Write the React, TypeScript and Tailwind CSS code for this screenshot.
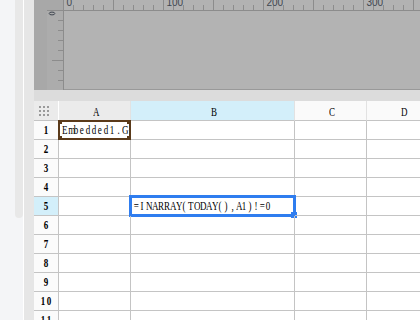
import React from "react";

const SERIF = { fontFamily: '"Liberation Serif", "DejaVu Serif", serif' };

const COLUMNS = [
  { key: "A", w: "w-[72px]", head: "bg-[#ebebeb]" },
  { key: "B", w: "w-[164px]", head: "bg-[#d3effa]" },
  { key: "C", w: "w-[72px]", head: "bg-[#fafafa]" },
  { key: "D", w: "w-[72px]", head: "bg-[#fafafa]" },
];

const ROWS = Array.from({ length: 11 }, (_, i) => i + 1);

// SimSun-like half-width text: every glyph sits in a 6px box
function Mono({ text }: { text: string }) {
  return (
    <span className="inline-flex">
      {text.split("").map((ch, i) => (
        <span key={i} className="inline-block w-[6px] text-center">
          <span className="inline-block scale-x-[0.75]">{ch}</span>
        </span>
      ))}
    </span>
  );
}

function HRuler() {
  const ticks = Array.from({ length: 36 }, (_, k) => k);
  return (
    <svg width="356" height="10" className="block">
      {ticks.map((k) =>
        k === 0 ? null : (
          <line
            key={k}
            x1={10 * k - 0.5}
            x2={10 * k - 0.5}
            y1={k % 5 === 0 ? 0 : 5}
            y2={10}
            stroke="#8c8c8c"
            strokeWidth="1"
          />
        )
      )}
      {[0, 100, 200, 300].map((n) => (
        <text
          key={n}
          x={n + 2.5}
          y={6}
          fontSize="10"
          fill="#3f4650"
          fontFamily="Liberation Sans, Arial, sans-serif"
        >
          {n}
        </text>
      ))}
    </svg>
  );
}

function VRuler() {
  const ticks = Array.from({ length: 8 }, (_, k) => k);
  return (
    <svg width="16" height="78" className="block">
      {ticks.map((k) =>
        k === 0 ? null : (
          <line
            key={k}
            x1={k % 5 === 0 ? 5 : 11}
            x2={16}
            y1={10 * k - 0.5}
            y2={10 * k - 0.5}
            stroke="#8c8c8c"
            strokeWidth="1"
          />
        )
      )}
      <ellipse cx="5" cy="2.5" rx="2.8" ry="1.4" fill="none" stroke="#3f4650" strokeWidth="1" />
    </svg>
  );
}

function GridIcon() {
  return (
    <div className="grid grid-cols-3 gap-[2px]">
      {Array.from({ length: 9 }, (_, i) => (
        <span key={i} className="w-[2px] h-[2px] bg-[#9a9a9a]" />
      ))}
    </div>
  );
}

function Corners({ color }: { color: string }) {
  return (
    <>
      <span className={`absolute -left-[1px] -top-[1px] w-[3px] h-[3px] ${color}`} />
      <span className={`absolute -right-[1px] -top-[1px] w-[3px] h-[3px] ${color}`} />
      <span className={`absolute -left-[1px] -bottom-[1px] w-[3px] h-[3px] ${color}`} />
      <span className={`absolute -right-[1px] -bottom-[1px] w-[3px] h-[3px] ${color}`} />
    </>
  );
}

export default function App() {
  return (
    <div className="w-[420px] h-[320px] flex overflow-hidden bg-white">
      {/* Left rail */}
      <div className="w-[15px] bg-[#f4f5f7]" />
      <div className="w-[8px] bg-[#f4f5f7]">
        <div className="h-[218px] bg-[#e8e8e8] rounded-b-[4px]" />
      </div>
      <div className="w-[1px] bg-white" />
      <div className="w-[10px] bg-[#e6e6e6]" />

      {/* Main */}
      <div className="flex-1 flex flex-col min-w-0">
        {/* Designer canvas with rulers */}
        <div className="h-[90px] flex bg-[#a8a8a8]">
          <div className="w-[13px]" />
          <div className="flex-1 flex flex-col min-w-0">
            <div className="h-[10px] flex">
              <div className="w-[16px]" />
              <div className="w-[1px] bg-[#8c8c8c]" />
              <div className="flex-1 bg-[#b2b2b2] overflow-hidden">
                <HRuler />
              </div>
            </div>
            <div className="h-[1px] bg-[#8c8c8c]" />
            <div className="flex-1 flex">
              <div className="w-[16px] bg-[#acacac] overflow-hidden">
                <VRuler />
              </div>
              <div className="w-[1px] bg-[#8c8c8c]" />
              <div className="flex-1 bg-[#b3b3b3] border-b border-[#999999]" />
            </div>
          </div>
        </div>
        <div className="h-[11px] bg-[#dcdcdc]" />

        {/* Spreadsheet */}
        <div className="flex-1 overflow-hidden text-[12px] leading-none text-black" style={SERIF}>
          <div className="flex h-[20px]">
            <div className="w-[25px] shrink-0 flex items-center pl-[5px] bg-[#ebebeb] border-r border-white border-b border-b-[#c4c4c4]">
              <GridIcon />
            </div>
            {COLUMNS.map((c) => (
              <div
                key={c.key}
                className={`${c.w} shrink-0 flex items-center justify-center pt-[2px] ${c.head} border-r border-r-[#e2e2e2] border-b border-b-[#c4c4c4]`}
              >
                <Mono text={c.key} />
              </div>
            ))}
          </div>
          {ROWS.map((r) => (
            <div key={r} className="flex h-[19px]">
              <div
                className={`w-[25px] shrink-0 flex items-center justify-center font-bold border-r border-b border-[#c4c4c4] ${
                  r === 5 ? "bg-[#d3effa]" : "bg-[#fbfbfb]"
                }`}
              >
                <Mono text={String(r)} />
              </div>
              {COLUMNS.map((c) => (
                <div
                  key={c.key}
                  className={`${c.w} shrink-0 relative flex items-center border-r border-b border-[#c4c4c4] whitespace-nowrap`}
                >
                  {r === 1 && c.key === "A" && (
                    <>
                      <div className="absolute -left-[1px] -top-[1px] -right-[1px] -bottom-[1px] border-2 border-[#5a3a1a]">
                        <Corners color="bg-[#5a3a1a]" />
                      </div>
                      <span className="pl-[2px]">
                        <Mono text="Embedded1.G" />
                      </span>
                    </>
                  )}
                  {r === 5 && c.key === "B" && (
                    <>
                      <div className="absolute -left-[2px] -top-[2px] -right-[2px] -bottom-[2px] border-[3px] border-[#2f7def]">
                        <span className="absolute -right-[4px] -bottom-[4px] w-[6px] h-[6px] bg-[#2f7def]" />
                      </div>
                      <span className="pl-[2px]">
                        <Mono text="=INARRAY(TODAY(),A1)!=0" />
                      </span>
                    </>
                  )}
                </div>
              ))}
            </div>
          ))}
        </div>
      </div>
    </div>
  );
}
